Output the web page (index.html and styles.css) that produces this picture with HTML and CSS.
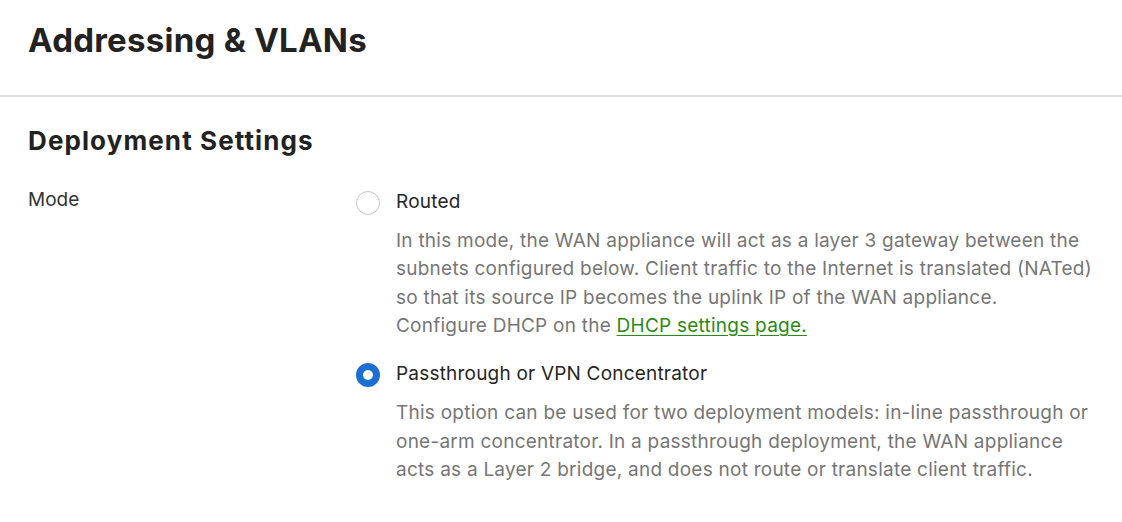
FILE: index.html
```html
<!DOCTYPE html>
<html>
<head>
<meta charset="utf-8">
<link rel="stylesheet" href="styles.css">
</head>
<body>
<header class="page-header">
  <h1 class="page-title">Addressing &amp; VLANs</h1>
</header>
<section class="section">
  <h2 class="section-title">Deployment Settings</h2>
  <div class="field">
    <div class="field-label">Mode</div>
    <div class="options">
      <div class="option">
        <span class="radio"></span>
        <div class="option-body">
          <div class="option-label">Routed</div>
          <p class="option-desc">In this mode, the WAN appliance will act as a layer 3 gateway between the subnets configured below. Client traffic to the Internet is translated (NATed) so that its source IP becomes the uplink IP of the WAN appliance.<br>Configure DHCP on the <a class="link" href="#">DHCP settings page.</a></p>
        </div>
      </div>
      <div class="option">
        <span class="radio checked"></span>
        <div class="option-body">
          <div class="option-label">Passthrough or VPN Concentrator</div>
          <p class="option-desc">This option can be used for two deployment models: in-line passthrough or one-arm concentrator. In a passthrough deployment, the WAN appliance acts as a Layer 2 bridge, and does not route or translate client traffic.</p>
        </div>
      </div>
    </div>
  </div>
</section>
</body>
</html>
```
FILE: styles.css
```css
* { box-sizing: border-box; }
html, body { margin: 0; padding: 0; background: #fff; }
body {
  font-family: Inter, "Noto Sans", sans-serif;
  color: #222;
  width: 1122px;
  height: 522px;
  overflow: hidden;
}
.page-header {
  height: 97px;
  border-bottom: 2px solid #e2e2e2;
  padding: 20px 28px 0;
}
.page-title {
  margin: 0;
  font-size: 33px;
  font-weight: 700;
  line-height: 40px;
  letter-spacing: 0.25px;
  color: #222;
}
.section { padding: 28px 28px 0; }
.section-title {
  margin: 0;
  font-size: 26px;
  font-weight: 700;
  line-height: 32px;
  letter-spacing: 1.1px;
  color: #222;
}
.field {
  display: flex;
  margin-top: 29px;
}
.field-label {
  flex: none;
  width: 328px;
  font-size: 19px;
  line-height: 28px;
  color: #333;
}
.options {
  display: flex;
  flex-direction: column;
  gap: 20px;
  padding-top: 2px;
}
.option { display: flex; gap: 16px; }
.radio {
  flex: none;
  width: 24px;
  height: 24px;
  border-radius: 50%;
  border: 1.5px solid #c6c6c6;
  margin-top: 3px;
  background: #fff;
}
.radio.checked {
  border: 7px solid #1b6fd1;
}
.option-body { width: 702px; }
.option-label {
  font-size: 19px;
  line-height: 28px;
  letter-spacing: 0.2px;
  color: #262626;
}
.option-desc {
  margin: 11px 0 0;
  font-size: 19px;
  line-height: 28.33px;
  letter-spacing: 0.24px;
  color: #767676;
}
.link {
  color: #2b8a17;
  text-decoration: underline;
  text-underline-offset: 3px;
}
```
